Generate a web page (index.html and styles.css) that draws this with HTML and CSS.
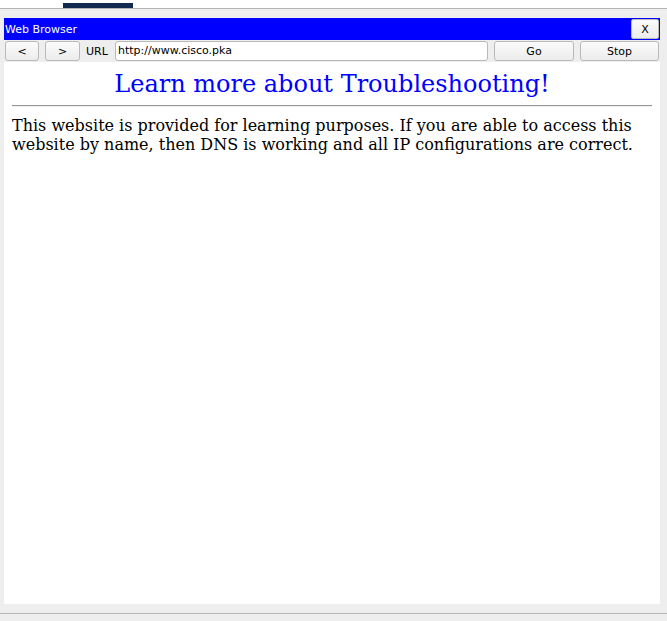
FILE: index.html
```html
<!DOCTYPE html>
<html>
<head>
<meta charset="utf-8">
<link rel="stylesheet" href="styles.css">
</head>
<body>
<div class="tabs">
  <div class="tab-active"></div>
</div>
<div class="window">
  <div class="titlebar">
    <span class="title">Web Browser</span>
    <button class="btn close-btn">X</button>
  </div>
  <div class="navbar">
    <button class="btn nav-btn back-btn">&lt;</button>
    <button class="btn nav-btn fwd-btn">&gt;</button>
    <span class="url-label">URL</span>
    <div class="url-input">http://www.cisco.pka</div>
    <button class="btn go-btn">Go</button>
    <button class="btn stop-btn">Stop</button>
  </div>
  <div class="content">
    <h1 class="heading">Learn more about Troubleshooting!</h1>
    <hr class="rule">
    <p class="text">This website is provided for learning purposes. If you are able to access this website by name, then DNS is working and all IP configurations are correct.</p>
  </div>
</div>
<div class="footer"></div>
</body>
</html>
```
FILE: styles.css
```css
* { box-sizing: border-box; }
html, body { margin: 0; padding: 0; }
body {
  width: 667px;
  height: 621px;
  overflow: hidden;
  background: #eeeeee;
  font-family: "DejaVu Sans", sans-serif;
}
.tabs {
  height: 9px;
  background: #ffffff;
  border-bottom: 1px solid #b4b4b4;
  display: flex;
  align-items: flex-end;
  padding-left: 63px;
}
.tab-active {
  width: 70px;
  height: 5px;
  background: #112a4e;
}
.window {
  margin: 9px 7px 0 4px;
  height: 586px;
  display: flex;
  flex-direction: column;
}
.titlebar {
  height: 22px;
  background: #0000ff;
  display: flex;
  align-items: center;
  justify-content: space-between;
  padding: 1px 1px 1px 0;
}
.title {
  color: #ffffff;
  font-size: 11px;
  padding-left: 1px;
  padding-top: 1px;
}
.btn {
  font-family: "DejaVu Sans", sans-serif;
  font-size: 11px;
  color: #000;
  background: linear-gradient(#fbfbfb, #ececec);
  border: 1px solid #b9b9b9;
  border-radius: 3px;
  height: 20px;
  padding: 0;
  margin: 0;
  flex: none;
}
.close-btn {
  width: 28px;
  height: 20px;
  border-radius: 2px;
}
.navbar {
  height: 22px;
  display: flex;
  align-items: center;
  padding: 1px;
  background: #eeeeee;
}
.back-btn { width: 34px; margin-right: 6px; }
.fwd-btn { width: 35px; }
.url-label {
  font-size: 11px;
  width: 35px;
  padding-left: 6px;
  flex: none;
}
.url-input {
  width: 373px;
  height: 20px;
  flex: none;
  background: #fff;
  border: 1px solid #b9b9b9;
  border-radius: 3px;
  font-size: 11px;
  line-height: 18px;
  padding-left: 2px;
}
.go-btn { width: 80px; margin-left: 6px; }
.stop-btn { width: 79px; margin-left: 6px; }
.content {
  flex: 1;
  background: #ffffff;
  padding: 8px 8px;
  font-family: "DejaVu Serif", serif;
}
.heading {
  margin: 0;
  color: #0000ff;
  text-align: center;
  font-weight: normal;
  font-size: 24px;
  line-height: 28px;
}
.rule {
  margin: 7px 0 0 0;
  border: none;
  border-top: 1px solid #999;
  border-bottom: 1px solid #eee;
}
.text {
  margin: 9px 0 0 0;
  font-size: 16px;
  line-height: 19px;
  color: #000;
}
.footer {
  margin-top: 9px;
  border-top: 1px solid #b4b4b4;
}
```
